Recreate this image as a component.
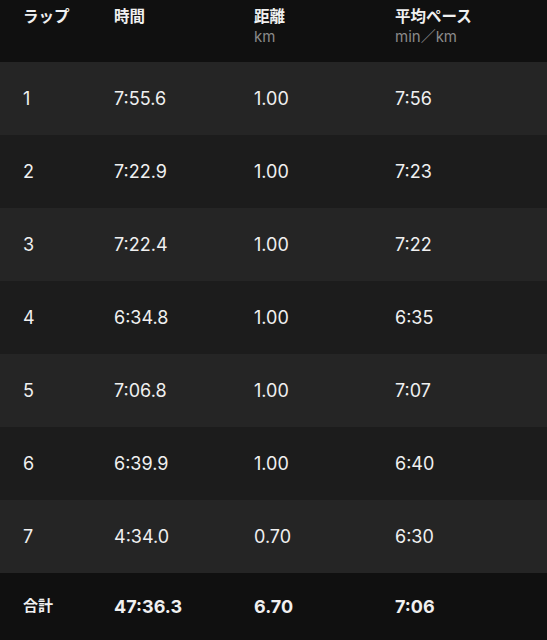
import React from 'react';

const laps = [
  { lap: '1', time: '7:55.6', dist: '1.00', pace: '7:56' },
  { lap: '2', time: '7:22.9', dist: '1.00', pace: '7:23' },
  { lap: '3', time: '7:22.4', dist: '1.00', pace: '7:22' },
  { lap: '4', time: '6:34.8', dist: '1.00', pace: '6:35' },
  { lap: '5', time: '7:06.8', dist: '1.00', pace: '7:07' },
  { lap: '6', time: '6:39.9', dist: '1.00', pace: '6:40' },
  { lap: '7', time: '4:34.0', dist: '0.70', pace: '6:30' },
];

const cols = 'grid grid-cols-[91px_140px_141px_1fr] px-[23px]';

export default function App() {
  return (
    <div
      className="w-[547px] h-[640px] bg-[#101010] text-[#f0f0f0] overflow-hidden"
      style={{ fontFamily: 'Inter, "Noto Sans CJK JP", sans-serif' }}
    >
      {/* header */}
      <div className={`${cols} h-[62px] pt-[7px] bg-[#101010]`}>
        <div className="text-[15.5px] font-bold leading-[20px]">ラップ</div>
        <div className="text-[15.5px] font-bold leading-[20px]">時間</div>
        <div>
          <div className="text-[15.5px] font-bold leading-[20px]">距離</div>
          <div className="text-[15px] leading-[20px] text-[#8a8a8a]">km</div>
        </div>
        <div>
          <div className="text-[15.5px] font-bold leading-[20px]">平均ペース</div>
          <div className="text-[15px] leading-[20px] text-[#8a8a8a]">min／km</div>
        </div>
      </div>

      {laps.map((r, i) => (
        <div
          key={r.lap}
          className={`${cols} h-[73px] items-center text-[18px] ${
            i % 2 === 0 ? 'bg-[#252525]' : 'bg-[#1c1c1c]'
          }`}
        >
          <div>{r.lap}</div>
          <div>{r.time}</div>
          <div>{r.dist}</div>
          <div>{r.pace}</div>
        </div>
      ))}

      {/* total */}
      <div className={`${cols} h-[67px] items-center text-[18px] font-bold bg-[#101010]`}>
        <div className="text-[15px]">合計</div>
        <div>47:36.3</div>
        <div>6.70</div>
        <div>7:06</div>
      </div>
    </div>
  );
}
